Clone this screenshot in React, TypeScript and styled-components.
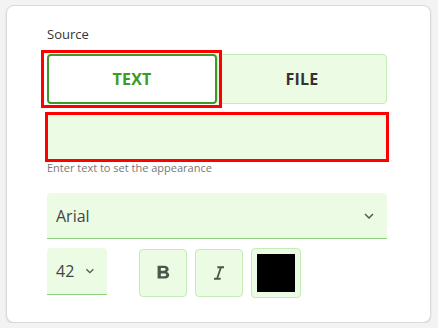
import React from "react";
import styled, { createGlobalStyle } from "styled-components";

const Global = createGlobalStyle`
  html, body { margin: 0; padding: 0; background: #f3f3f3; }
  body { font-family: "Open Sans", "Noto Sans", sans-serif; }
  * { box-sizing: border-box; }
`;

const Card = styled.div`
  margin: 5px 0 0 6px;
  width: 425px;
  height: 318px;
  background: #fff;
  border: 1px solid #dadada;
  border-radius: 8px;
  box-shadow: 0 1px 2px rgba(0, 0, 0, 0.12);
  padding: 19px 43px 0 40px;
`;

const Content = styled.div`
  width: 340px;
  display: flex;
  flex-direction: column;
`;

const Label = styled.div`
  font-size: 13px;
  line-height: 18px;
  font-weight: 500;
  color: #333;
`;

const Tabs = styled.div`
  margin-top: 11px;
  display: grid;
  grid-template-columns: 170px 170px;
`;

const Tab = styled.button<{ $active?: boolean }>`
  position: relative;
  height: 50px;
  font-family: "Open Sans", sans-serif;
  font-size: 16px;
  font-weight: 700;
  letter-spacing: 0.2px;
  border-radius: 4px;
  cursor: pointer;
  background: ${(p) => (p.$active ? "#ffffff" : "#ecfce4")};
  color: ${(p) => (p.$active ? "#3c9a26" : "#333")};
  border: ${(p) => (p.$active ? "2px solid #3c9a26" : "1px solid #c4ecb4")};
  ${(p) =>
    p.$active &&
    `&::after {
      content: "";
      position: absolute;
      z-index: 2;
      left: -8px;
      right: -7px;
      top: -6px;
      bottom: -6px;
      border: 3px solid #ff0000;
      pointer-events: none;
    }`}
`;

const TextInput = styled.div`
  margin-top: 10px;
  height: 46px;
  background: #ecfce4;
  outline: 3px solid #ff0000;
  outline-offset: -1px;
`;

const Helper = styled.div`
  font-size: 11px;
  line-height: 15px;
  color: #777;
`;

const Select = styled.div<{ $width?: number }>`
  display: flex;
  align-items: center;
  justify-content: ${(p) => (p.$width ? "flex-start" : "space-between")};
  height: ${(p) => (p.$width ? 47 : 46)}px;
  width: ${(p) => (p.$width ? `${p.$width}px` : "100%")};
  background: #ecfce4;
  border-radius: 4px 4px 0 0;
  border-bottom: 1.5px solid #8fd07d;
  padding: 0 9px 0 9px;
  font-size: 16px;
  color: #444;
`;

const SelectWrap = styled.div`
  margin-top: 18px;
`;

const Row = styled.div`
  margin-top: 9px;
  display: flex;
  align-items: flex-start;
`;

const Chevron = () => (
  <svg width="18" height="18" viewBox="0 0 24 24" fill="#555">
    <path d="M16.59 8.59L12 13.17 7.41 8.59 6 10l6 6 6-6z" />
  </svg>
);

const Buttons = styled.div`
  margin-left: 32px;
  display: flex;
  gap: 8px;
  align-items: flex-start;
`;

const IconButton = styled.button`
  margin-top: 1px;
  width: 48px;
  height: 48px;
  display: flex;
  align-items: center;
  justify-content: center;
  background: #ecfce4;
  border: 1px solid #c4ecb4;
  border-radius: 4px;
  padding: 0;
`;

const ColorButton = styled.button`
  width: 50px;
  height: 50px;
  display: flex;
  align-items: center;
  justify-content: center;
  background: #ecfce4;
  border: 1px solid #c4ecb4;
  border-radius: 4px;
  padding: 0;
`;

const Swatch = styled.div<{ $color: string }>`
  width: 38px;
  height: 38px;
  background: ${(p) => p.$color};
`;

const SizeText = styled.span`
  margin-right: 8px;
`;

export default function App() {
  return (
    <>
      <Global />
      <Card>
        <Content>
          <Label>Source</Label>
          <Tabs>
            <Tab $active>TEXT</Tab>
            <Tab>FILE</Tab>
          </Tabs>
          <TextInput />
          <Helper>Enter text to set the appearance</Helper>
          <SelectWrap>
            <Select>
              <span>Arial</span>
              <Chevron />
            </Select>
          </SelectWrap>
          <Row>
            <Select $width={60}>
              <SizeText>42</SizeText>
              <Chevron />
            </Select>
            <Buttons>
              <IconButton aria-label="bold">
                <svg width="26" height="22" viewBox="0 0 24 24" preserveAspectRatio="none" fill="#4b574b">
                  <path d="M15.6 10.79c.97-.67 1.65-1.77 1.65-2.79 0-2.26-1.75-4-4-4H7v14h7.04c2.09 0 3.71-1.7 3.71-3.79 0-1.52-.86-2.82-2.15-3.42zM10 6.5h3c.83 0 1.5.67 1.5 1.5s-.67 1.5-1.5 1.5h-3v-3zm3.5 9H10v-3h3.5c.83 0 1.5.67 1.5 1.5s-.67 1.5-1.5 1.5z" />
                </svg>
              </IconButton>
              <IconButton aria-label="italic">
                <svg width="20" height="20" viewBox="0 0 24 24" fill="#4b574b">
                  <path d="M10 4v2.2h2.8l-3.9 11.6H6V20h8v-2.2h-2.8l3.9-11.6H18V4z" />
                </svg>
              </IconButton>
              <ColorButton aria-label="color">
                <Swatch $color="#000" />
              </ColorButton>
            </Buttons>
          </Row>
        </Content>
      </Card>
    </>
  );
}
